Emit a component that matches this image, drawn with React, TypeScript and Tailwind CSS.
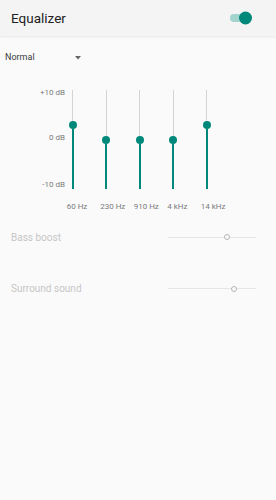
import React from 'react';

const bands = [
  { label: '60 Hz', value: 3 },
  { label: '230 Hz', value: 0 },
  { label: '910 Hz', value: 0 },
  { label: '4 kHz', value: 0 },
  { label: '14 kHz', value: 3 },
];

const TRACK = 99;
const THUMB = 8;

const Band: React.FC<{ label: string; value: number }> = ({ label, value }) => {
  const center = ((10 - value) / 20) * TRACK;
  const top = center - THUMB / 2;
  const bottom = TRACK - center - THUMB / 2;
  return (
    <div className="w-[33.5px] flex flex-col items-start">
      <div className="ml-[2px] w-[8px] h-[99px] flex flex-col items-center">
        <div className="w-[1px] bg-[#d4d4d4]" style={{ height: top }} />
        <div className="w-[8px] h-[8px] rounded-full bg-[#00897b] shrink-0" />
        <div className="w-[2px] bg-[#00897b]" style={{ height: bottom }} />
      </div>
      <span className="mt-[13px] text-[8px] leading-[10px] text-[#7a7a7a] whitespace-nowrap">{label}</span>
    </div>
  );
};

const Slider: React.FC<{ pos: number }> = ({ pos }) => (
  <div className="relative w-[88px] h-[1px] bg-[#e6e6e6]">
    <div
      className="absolute top-1/2 -translate-y-1/2 -translate-x-1/2 w-[6px] h-[6px] rounded-full border-[1.5px] border-[#b5b5b5] bg-[#fafafa]"
      style={{ left: pos }}
    />
  </div>
);

export default function App() {
  return (
    <div className="w-[276px] h-[500px] bg-[#fafafa] font-['Roboto',sans-serif] overflow-hidden">
      <div className="h-[36px] bg-[#f4f4f4] shadow-[0_1px_2px_rgba(0,0,0,0.08)] flex items-center justify-between pl-[11px] pr-[26px]">
        <span className="text-[13.5px] text-[#212121]">Equalizer</span>
        <div className="relative w-[20px] h-[8px] rounded-full bg-[#a3d3cd]">
          <div className="absolute right-[-2px] top-1/2 -translate-y-1/2 w-[13px] h-[13px] rounded-full bg-[#00897b]" />
        </div>
      </div>

      <div className="mt-[14px] h-[16px] px-[5px] flex items-center">
        <span className="w-[70px] text-[9px] text-[#3a3a3a]">Normal</span>
        <svg width="6" height="4" viewBox="0 0 6 4">
          <path d="M0 0 L6 0 L3 3.5 Z" fill="#666" />
        </svg>
      </div>

      <div className="mt-[22px] flex items-start">
        <div className="w-[66px] h-[102px] pr-[1px] flex flex-col justify-between items-end text-[8px] leading-[10px] text-[#7a7a7a]">
          <span>+10 dB</span>
          <span className="-mt-[2px]">0 dB</span>
          <span>-10 dB</span>
        </div>
        <div className="mt-[2px] flex ml-[0.7px]">
          {bands.map((b) => (
            <Band key={b.label} label={b.label} value={b.value} />
          ))}
        </div>
      </div>

      <div className="mt-[17px] h-[16px] pl-[11px] pr-[20px] flex items-center justify-between">
        <span className="text-[10px] text-[#c6c6c6]">Bass boost</span>
        <Slider pos={58.5} />
      </div>

      <div className="mt-[35.5px] h-[16px] pl-[11px] pr-[20px] flex items-center justify-between">
        <span className="text-[10px] text-[#c6c6c6]">Surround sound</span>
        <Slider pos={66.3} />
      </div>
    </div>
  );
}
